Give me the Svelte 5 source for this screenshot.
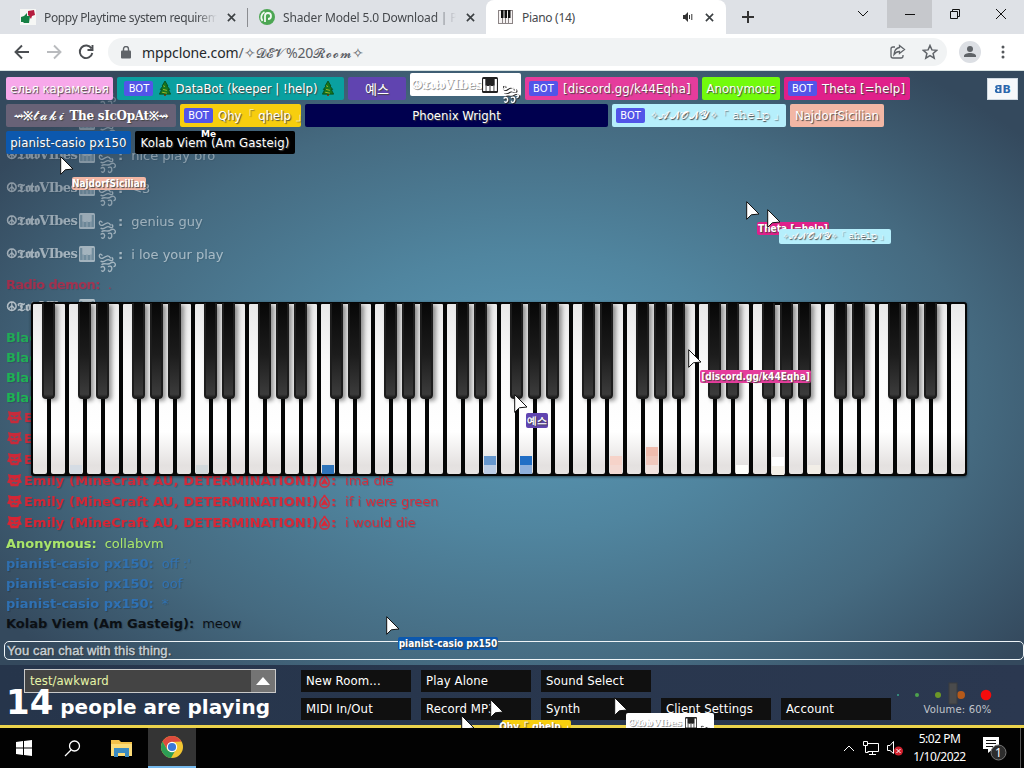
<script lang="ts">
	const whiteKeys = Array.from({ length: 52 }, (_, i) => i);
	const hasSharp = (i: number) => i < 51 && [0, 2, 3, 5, 6].includes(i % 7);

	// colours are stacked from the bottom of the key upwards
	const blips: Record<number, string[]> = {
		2: ['#d5dce4'],
		9: ['#d3d9dc'],
		16: ['#2e74ba'],
		25: ['#bccde5', '#6697cd'],
		27: ['#8eafdb', '#216ec5'],
		32: ['#f4d9d2', '#f6d3c9'],
		34: ['#f2e3df', '#f0c8bd', '#efbcae'],
		39: ['#fffffc'],
		41: ['#f4f0e8', '#ffffff'],
		43: ['#f2eee7']
	};

	const emily = 'Emily (MineCraft AU, DETERMINATION!)';

	type Line = { kind: string; name: string; text: string; color: string; opacity: number };

	const chat: Line[] = [
		{ kind: 'toto', name: '', text: '', color: '#ffffff', opacity: 0.25 },
		{ kind: 'toto', name: '', text: '', color: '#ffffff', opacity: 0.3 },
		{ kind: 'toto', name: '', text: 'nice play bro', color: '#ffffff', opacity: 0.38 },
		{ kind: 'toto', name: '', text: '<3', color: '#ffffff', opacity: 0.42 },
		{ kind: 'toto', name: '', text: 'genius guy', color: '#ffffff', opacity: 0.48 },
		{ kind: 'toto', name: '', text: 'i loe your play', color: '#ffffff', opacity: 0.52 },
		{ kind: 'plain radio', name: 'Radio demon:', text: '.', color: '#d01c3d', opacity: 0.68 },
		{ kind: 'toto', name: '', text: '', color: '#ffffff', opacity: 0.6 },
		{ kind: 'plain', name: 'Black:', text: '', color: '#16c94c', opacity: 0.72 },
		{ kind: 'plain', name: 'Black:', text: '', color: '#16c94c', opacity: 0.75 },
		{ kind: 'plain', name: 'Black:', text: '', color: '#16c94c', opacity: 0.78 },
		{ kind: 'plain', name: 'Black:', text: '', color: '#16c94c', opacity: 0.8 },
		{ kind: 'emily', name: emily, text: '', color: '#e81f2e', opacity: 0.8 },
		{ kind: 'emily', name: emily, text: '', color: '#e81f2e', opacity: 0.82 },
		{ kind: 'emily', name: emily, text: '', color: '#e81f2e', opacity: 0.84 },
		{ kind: 'emily', name: emily, text: 'ima die', color: '#e81f2e', opacity: 0.86 },
		{ kind: 'emily', name: emily, text: 'if i were green', color: '#e81f2e', opacity: 0.88 },
		{ kind: 'emily', name: emily, text: 'i would die', color: '#e81f2e', opacity: 0.9 },
		{ kind: 'plain', name: 'Anonymous:', text: 'collabvm', color: '#b6f56a', opacity: 0.9 },
		{ kind: 'plain', name: 'pianist-casio px150:', text: "off :'", color: '#2f73b8', opacity: 0.9 },
		{ kind: 'plain', name: 'pianist-casio px150:', text: 'oof', color: '#2f73b8', opacity: 0.92 },
		{ kind: 'plain', name: 'pianist-casio px150:', text: '*', color: '#2f73b8', opacity: 0.95 },
		{ kind: 'plain', name: 'Kolab Viem (Am Gasteig):', text: 'meow', color: '#0b1015', opacity: 1 }
	];

	const names = [
		[
			{ id: 'karamel', text: 'елья карамелья', bg: '#f7a8ea', w: 107 },
			{ id: 'databot', text: 'DataBot (keeper | !help)', bg: '#0aa0a0', w: 227, bot: true },
			{ id: 'yes', text: '예스', bg: '#6044b0', w: 58 },
			{ id: 'toto', text: '', bg: '#ffffff', w: 111 },
			{ id: 'discord', text: '[discord.gg/k44Eqha]', bg: '#e53c9c', w: 173, bot: true },
			{ id: 'anon', text: 'Anonymous', bg: '#72fb0c', w: 78 },
			{ id: 'theta', text: 'Theta [=help]', bg: '#e0208a', w: 126, bot: true }
		],
		[
			{ id: 'taki', text: '', bg: '#686277', w: 170 },
			{ id: 'qhy', text: 'Qhy「 qhelp 」', bg: '#f7ce0e', w: 121, bot: true },
			{ id: 'phoenix', text: 'Phoenix Wright', bg: '#00004f', w: 303 },
			{ id: 'anony', text: '', bg: '#b6effc', w: 174, bot: true },
			{ id: 'najdorf', text: 'NajdorfSicilian', bg: '#f2b7a5', w: 94 }
		],
		[
			{ id: 'pianist', text: 'pianist-casio px150', bg: '#0c58ae', w: 125 },
			{ id: 'kolab', text: 'Kolab Viem (Am Gasteig)', bg: '#000000', w: 160 }
		]
	];

	const cursors = [
		{ id: 'najdorf', x: 60, y: 156, lx: 12, ly: 21, w: 74, h: 13, text: 'NajdorfSicilian', bg: '#f2b7a5' },
		{ id: 'theta', x: 746, y: 201, lx: 11, ly: 21, w: 72, h: 13, text: 'Theta [=help]', bg: '#e0208a' },
		{ id: 'anony', x: 767, y: 209, lx: 12, ly: 20, w: 112, h: 15, text: '', bg: '#b6effc' },
		{ id: 'discord', x: 688, y: 349, lx: 12, ly: 21, w: 111, h: 13, text: '[discord.gg/k44Eqha]', bg: '#e53c9c' },
		{ id: 'yes', x: 514, y: 394, lx: 12, ly: 19, w: 22, h: 15, text: '예스', bg: '#6044b0' },
		{ id: 'pianist', x: 386, y: 616, lx: 12, ly: 21, w: 100, h: 13, text: 'pianist-casio px150', bg: '#0c58ae' },
		{ id: 'qhy', x: 490, y: 699, lx: 12, ly: 21, w: 69, h: 14, text: 'Qhy「 qhelp 」', bg: '#f7ce0e' },
		{ id: 'none', x: 461, y: 715, lx: 0, ly: 0, w: 0, h: 0, text: '', bg: '' },
		{ id: 'toto', x: 614, y: 697, lx: 12, ly: 16, w: 88, h: 20, text: '', bg: '#ffffff' }
	];

	const buttons = ['New Room...', 'Play Alone', 'Sound Select', '', '', 'MIDI In/Out', 'Record MP3', 'Synth', 'Client Settings', 'Account'];
</script>

{#snippet totoName()}
	<span class="toto-name">☮𝕿𝖔𝖙𝖔𝐕𝐈𝐛𝐞𝐬</span><svg class="keys-emoji" viewBox="0 0 16 16"><rect width="16" height="16" rx="1.5" fill="currentColor" /><path class="holes" d="M2.200 2v12M6 9v5M10 9v5M13.800 2v12" stroke-width="2.2" /><path class="holes" d="M4 8.500v5.500M8 8.500v5.500M12 8.500v5.500" stroke-width="1" /></svg><svg class="swirl" viewBox="0 0 20 24" fill="none" stroke="currentColor" stroke-width="1.5"><path d="M5 5c-4-5-5 4 0 3 5-3 7-4 9 0M3 11c5 3 6-4 10-1 4 2 4-2 2-3M4 15c3-3 7 1 10-2 5-3 7 4 3 4M3 18c4-3 5 1 4 3-1 2-3 1-3 0M11 17c5-2 5 3 3 5-2 1-3-1-2-1" /></svg>
{/snippet}

{#snippet anonyName()}
	<span class="anony-name">✧<em>𝓐𝓝𝓞𝓝𝓨</em>✧<b>「&nbsp;𝚊𝚑𝚎𝚕𝚙&nbsp;」</b></span>
{/snippet}

{#snippet tree()}
	<svg class="tree" viewBox="0 0 12 16"><path d="M5 12h2v4H5z" fill="#7a3d10" /><path d="M6 0 9 5H8l3 4H9.500l2.500 5H0l2.500-5H1l3-4H3z" fill="#16751f" stroke="#063d0b" stroke-width=".7" /><path d="m4 5 2 1M4 9l4 1M3 12l5 1" stroke="#a7bb27" /></svg>
{/snippet}

<div class="screen">
	<header class="tabs">
		<div class="tab first">
			<svg width="16" height="16" viewBox="0 0 16 16"><rect width="16" height="16" fill="#f6f7f5" /><path d="M8 2l6-1 1 5-3 1-1 3-2-3-1-1z" fill="#b51c3e" /><path d="M1 8l3-1 3-3v3h3l-1 7H4l-1-1H1z" fill="#168044" /></svg>
			<span class="title">Poppy Playtime system requirements</span>
			<svg class="x" viewBox="0 0 10 10"><path d="m1 1 8 8M9 1 1 9" /></svg>
		</div>
		<i class="divider"></i>
		<div class="tab second">
			<svg width="16" height="16" viewBox="0 0 16 16"><circle cx="8" cy="8" r="8" fill="#4ca653" /><path d="M6 13V7a3 3 0 1 1 3 3M3.500 12a6 6 0 0 1 2-9" fill="none" stroke="#f3faf3" stroke-width="1.800" /></svg>
			<span class="title">Shader Model 5.0 Download | Peatix</span>
			<svg class="x" viewBox="0 0 10 10"><path d="m1 1 8 8M9 1 1 9" /></svg>
		</div>
		<div class="tab active">
			<svg width="15" height="14" viewBox="0 0 15 14"><rect width="15" height="14" fill="#8b8485" /><path d="M1 1h3v12H1zm4 0h2v12H5zm3 0h2v12H8zm3 0h3v12h-3z" fill="#f6f3f3" /><path d="M3 0h2.500v8H3zm3.500 0H9v8H6.500zM10 0h2.500v8H10z" fill="#111" /></svg>
			<span class="title">Piano (14)</span>
			<svg class="sound" viewBox="0 0 10 10"><path d="M0 3h2l3-3v10L2 7H0z" fill="#333" /><path d="M6.500 3v4M8.800 2v6" stroke="#333" /></svg>
			<svg class="x" viewBox="0 0 10 10"><path d="m1 1 8 8M9 1 1 9" /></svg>
		</div>
		<svg class="plus" viewBox="0 0 12 12"><path d="M6 0v12M0 6h12" stroke="#333" stroke-width="2" /></svg>
		<div class="window-buttons">
			<span><svg width="12" height="12" viewBox="0 0 12 12"><path d="m1 3 5 5 5-5" /></svg></span>
			<span class="hover"><svg width="12" height="12" viewBox="0 0 12 12"><path d="M1 6.500h10" /></svg></span>
			<span><svg width="12" height="12" viewBox="0 0 12 12"><path d="M1.500 3.500h7v7h-7zM3.500 3.500v-2h7v7h-2" /></svg></span>
			<span><svg width="12" height="12" viewBox="0 0 12 12"><path d="m1 1 10 10M11 1 1 11" /></svg></span>
		</div>
	</header>

	<nav class="toolbar">
		<svg class="nav" viewBox="0 0 16 16"><path d="M15 8H2M8 1.500 1.500 8 8 14.500" /></svg>
		<svg class="nav dim" viewBox="0 0 16 16"><path d="M1 8h13M8 1.500 14.500 8 8 14.500" /></svg>
		<svg class="nav" viewBox="0 0 16 16"><path d="M13.500 4.500A6.300 6.300 0 1 0 14.300 9M14.500 1v5h-5" /></svg>
		<div class="address">
			<svg width="10" height="13" viewBox="0 0 10 13"><rect y="4.500" width="10" height="8" rx="1" fill="#5f6368" /><path d="M2.500 5V3a2.500 2.500 0 0 1 5 0v2" fill="none" stroke="#5f6368" stroke-width="1.400" /></svg>
			<span class="url">mppclone.com<em>/✧<b>𝓓𝓔𝓥</b>%20<b>𝓡𝓸𝓸𝓶</b>✧</em></span>
			<svg class="share" viewBox="0 0 16 16"><path d="M5 3H3a2 2 0 0 0-2 2v7a2 2 0 0 0 2 2h8a2 2 0 0 0 2-2v-1M9.500 1.500 14.500 5.500l-5 4V7.500C7 7.500 5.500 8.500 4 10.500c.3-3.500 2-6.500 5.500-7z" /></svg>
			<svg class="star" viewBox="0 0 16 16"><path d="m8 1.500 1.900 4.400 4.800.4-3.600 3.100 1.100 4.700L8 11.600l-4.200 2.500 1.100-4.700L1.300 6.300l4.800-.4z" /></svg>
		</div>
		<svg class="avatar" viewBox="0 0 22 22"><circle cx="11" cy="11" r="11" fill="#dcdfe4" /><circle cx="11" cy="8" r="3" fill="#5f6368" /><path d="M5 16v-1c0-4 12-4 12 0v1z" fill="#5f6368" /></svg>
		<svg class="dots" viewBox="0 0 4 14"><circle cx="2" cy="2" r="1.500" /><circle cx="2" cy="7" r="1.500" /><circle cx="2" cy="12" r="1.500" /></svg>
	</nav>

	<main class="room">
		<section class="chat">
			{#each chat as line}
				<div class="line {line.kind}" style="color: {line.color}; opacity: {line.opacity}">
					{#if line.kind === 'toto'}
						<strong>{@render totoName()}<span class="colon">:</span></strong>
					{:else if line.kind === 'emily'}
						<svg class="face" viewBox="0 0 16 16"><path d="M1 1l4 1h6l4-1-1 5 2 4-3 1-1 3H4l-1-3-3-1 2-4z" fill="currentColor" /><path d="M4 6l3 1M9 7l3-1M5 11l2-1 2 1 2-1" stroke="#51606f" stroke-width="1.300" fill="none" /></svg><strong class="emily-name">{line.name}</strong><svg class="drop" viewBox="0 0 12 16" fill="none" stroke="currentColor" stroke-width="1.600"><path d="M6 1c1 4 5 5 5 9a5 5 0 0 1-10 0C1 6 5 5 6 1z" /><path d="m3 12 3-5 3 5-3-2z" fill="currentColor" /></svg><strong>:</strong>
					{:else}
						<strong>{line.name}</strong>
					{/if}
					<span class="message">{line.text}</span>
				</div>
			{/each}
		</section>

		<div class="piano">
			{#each whiteKeys as i}
				<div class="white" class:pressed={i === 41}>
					{#if hasSharp(i)}<div class="black"></div>{/if}
					<div class="blips">
						{#each blips[i] ?? [] as color}
							<i style="background: {color}"></i>
						{/each}
					</div>
				</div>
			{/each}
		</div>

		<section class="names">
			{#each names as row}
				<div class="row">
					{#each row as p}
						<div class="name {p.id}" style="width: {p.w}px; background: {p.bg}">
							{#if p.bot}<span class="bot">BOT</span>{/if}
							{#if p.id === 'toto'}
								{@render totoName()}
							{:else if p.id === 'taki'}
								<span class="taki-name">⇝※<em>𝓽𝓪𝓴𝓲</em> The sIcOpAt※⇝</span>
							{:else if p.id === 'anony'}
								{@render anonyName()}
							{:else if p.id === 'databot'}
								{@render tree()}<span>{p.text}</span>{@render tree()}
							{:else}
								<span>{p.text}</span>
							{/if}
						</div>
					{/each}
				</div>
			{/each}
		</section>

		<button class="bb"><span class="flip">B</span><span>B</span></button>

		<div class="chat-input">You can chat with this thing.</div>

		<footer class="bottom">
			<div class="left">
				<div class="room-select"><span>test/awkward</span><i><svg width="14" height="8" viewBox="0 0 14 8"><path d="M0 8 7 0l7 8z" fill="#fff" /></svg></i></div>
				<div class="count"><b>14</b> people are playing</div>
			</div>
			<div class="buttons">
				{#each buttons as label}
					<div class:button={label !== ''}>{label}</div>
				{/each}
			</div>
			<div class="volume">
				<svg width="100" height="24" viewBox="0 0 100 24"><circle cx="3" cy="13" r="1" fill="#3aa08a" /><circle cx="22" cy="13" r="2" fill="#4da24d" /><circle cx="43" cy="13" r="3" fill="#6c9728" /><circle cx="66" cy="13" r="4" fill="#b65a1a" /><circle cx="91" cy="13" r="5.300" fill="#f50c0c" /><rect x="54" y="1" width="8" height="21" fill="#4a4b4c" stroke="#3a3c3e" /></svg>
				<span>Volume: 60%</span>
			</div>
		</footer>
	</main>

	{#each cursors as c}
		<div class="cursor" style="left: {c.x}px; top: {c.y}px">
			{#if c.w}
				<div class="label {c.id}" style="left: {c.lx}px; top: {c.ly}px; width: {c.w}px; height: {c.h}px; background: {c.bg}">
					{#if c.id === 'toto'}
						{@render totoName()}
					{:else if c.id === 'anony'}
						{@render anonyName()}
					{:else}
						<span>{c.text}</span>
					{/if}
				</div>
			{/if}
			<svg width="14" height="20" viewBox="0 0 14 20"><path d="M.7.7v17.600l4.600-4.500L13 13z" fill="#fff" stroke="#111" stroke-width="1" /></svg>
		</div>
	{/each}
	<div class="me">Me</div>

	<footer class="taskbar">
		<div class="task"><svg width="16" height="16" viewBox="0 0 16 16"><path d="m0 2 7-1v6.500H0zM8 1l8-1v7.500H8zM0 8.500h7V15l-7-1zM8 8.500h8V16l-8-1z" fill="#fff" /></svg></div>
		<div class="task"><svg width="17" height="17" viewBox="0 0 17 17" fill="none" stroke="#fff" stroke-width="1.300"><circle cx="10.500" cy="6" r="5" /><path d="m7 10-6 6" /></svg></div>
		<div class="task folder"><svg width="22" height="18" viewBox="0 0 22 18"><path d="M0 1h8l2 2h11v14H0z" fill="#f3c14b" /><path d="M0 5h21v12H0z" fill="#fcdc78" /><path d="M3 9h15v9h-4v-4H7v4H3z" fill="#3b8bc2" /></svg></div>
		<div class="task on">
			<svg width="22" height="22" viewBox="0 0 22 22"><circle cx="11" cy="11" r="11" fill="#f3c632" /><path d="M11 11 1.500 5.500A11 11 0 0 1 20.500 5.500L11 6z" fill="#dd4b3e" /><path d="M1.500 5.500 6 13l5-7z" fill="#dd4b3e" /><path d="M1.500 5.500A11 11 0 0 0 10 22l4-7H7z" fill="#2c9d55" /><circle cx="11" cy="11" r="5.200" fill="#fff" /><circle cx="11" cy="11" r="4.100" fill="#3b78d8" /></svg>
		</div>
		<div class="tray">
			<svg width="12" height="8" viewBox="0 0 12 8"><path d="m1 7 5-5 5 5" /></svg>
			<svg width="16" height="14" viewBox="0 0 16 14"><path d="M4 2.500h11.500v8H4.500M9.500 11v2.500M6 13.500h7M.5.5h4v4h-4zM2.500 4.500v7h3" /></svg>
			<svg width="16" height="15" viewBox="0 0 16 15"><path d="M.5 4.500H3l3.500-4v12L3 9.500H.5z" /><circle cx="11.500" cy="10" r="4.500" fill="#d3222f" stroke="none" /><path d="m9.500 8 4 4M13.500 8l-4 4" /></svg>
			<div class="clock"><span>5:02 PM</span><span>1/10/2022</span></div>
			<svg class="notice" width="26" height="26" viewBox="0 0 26 26"><path d="M1 2h16v12h-6l-5 4v-4H1z" fill="#fff" stroke="none" /><path d="M4 5.500h10M4 8.500h10M4 11.500h7" stroke="#111" /><circle cx="16.500" cy="17.500" r="7.500" fill="#2d2d2d" stroke="#777" /><text x="16.500" y="22" text-anchor="middle">1</text></svg>
			<i class="edge"></i>
		</div>
	</footer>
</div>

<style>
	:global(body) {
		margin: 0;
		overflow: hidden;
	}

	.screen {
		position: relative;
		width: 1024px;
		height: 768px;
		overflow: hidden;
		display: flex;
		flex-direction: column;
		font-family: 'DejaVu Sans', sans-serif;
		box-sizing: border-box;
	}

	svg {
		flex: none;
	}

	.tabs {
		height: 34px;
		background: #dee1e6;
		display: flex;
		align-items: center;
		font: 12px 'Noto Sans', sans-serif;
		color: #45484c;
	}

	.tab {
		display: flex;
		align-items: center;
		box-sizing: border-box;
	}

	.tab .title {
		white-space: nowrap;
		overflow: hidden;
	}

	.tab.first {
		width: 247px;
		padding-left: 20px;
	}

	.tab.second {
		width: 238px;
		padding-left: 11px;
	}

	.tab.first .title,
	.tab.second .title {
		width: 173px;
		margin: 0 10px 0 8px;
		letter-spacing: -0.35px;
		mask-image: linear-gradient(to right, #000 88%, transparent);
	}

	.tab.second .title {
		letter-spacing: -0.15px;
	}

	.divider {
		width: 1px;
		height: 19px;
		background: #8b8d91;
	}

	.tab.active {
		width: 240px;
		height: 34px;
		padding-left: 12px;
		background: #fff;
		border-radius: 8px 8px 0 0;
	}

	.tab.active .title {
		width: 161px;
		margin-left: 9px;
		letter-spacing: -0.3px;
	}

	.x {
		width: 9px;
		height: 9px;
		stroke: #3c4043;
		stroke-width: 1.8;
	}

	.sound {
		width: 10px;
		height: 10px;
		margin-right: 12px;
	}

	.plus {
		width: 12px;
		margin-left: 16px;
	}

	.window-buttons {
		margin-left: auto;
		display: flex;
		height: 28px;
		align-self: flex-start;
	}

	.window-buttons span {
		width: 46px;
		display: flex;
		align-items: center;
		justify-content: center;
	}

	.window-buttons span:first-child {
		width: 48px;
	}

	.window-buttons svg {
		fill: none;
		stroke: #111;
	}

	.window-buttons .hover {
		background: #c6c8cc;
		width: 45px;
	}

	.toolbar {
		height: 36px;
		background: #fff;
		border-bottom: 1px solid #d7e2e1;
		display: flex;
		align-items: center;
		padding-left: 14px;
	}

	.nav {
		width: 16px;
		height: 16px;
		margin-right: 16px;
		fill: none;
		stroke: #4b4e52;
		stroke-width: 1.9;
	}

	.nav.dim {
		stroke: #b9bbbe;
	}

	.address {
		width: 839px;
		height: 28px;
		margin-left: -2px;
		border-radius: 14px;
		background: #f1f3f4;
		display: flex;
		align-items: center;
		padding-left: 13px;
		box-sizing: border-box;
	}

	.url {
		flex: 1;
		margin-left: 11px;
		font: 14px 'Noto Sans', sans-serif;
		letter-spacing: -0.1px;
		color: #25282b;
	}

	.url em {
		font-style: normal;
		color: #5c6065;
	}

	.url b {
		font-weight: normal;
		font-size: 13px;
		letter-spacing: 0.8px;
	}

	.share,
	.star {
		width: 16px;
		height: 16px;
		margin-right: 16px;
		fill: none;
		stroke: #5f6368;
		stroke-width: 1.3;
	}

	.star {
		margin-right: 9px;
		stroke-width: 1.5;
	}

	.avatar {
		width: 22px;
		margin-left: 12px;
	}

	.dots {
		width: 4px;
		margin-left: 20px;
		fill: #55585c;
	}

	.room {
		position: relative;
		height: 657px;
		background: radial-gradient(ellipse 640px 400px at 530px 320px, #5a9ab8 0%, #50859f 35%, #456a80 70%, #34495d 100%);
	}

	.chat {
		position: absolute;
		left: 6px;
		bottom: 95px;
		width: 700px;
		font-size: 13px;
	}

	.line {
		height: 20px;
		display: flex;
		align-items: center;
		white-space: nowrap;
		text-shadow: 1px 1px 1px rgba(0, 0, 0, 0.2);
	}

	.line.toto {
		height: 26px;
		padding-bottom: 7px;
	}

	.line.emily {
		height: 21px;
	}

	.line.radio {
		letter-spacing: -0.6px;
	}

	.line strong {
		display: flex;
		align-items: center;
	}

	.message {
		margin-left: 8px;
	}

	.colon {
		margin-left: 1px;
	}

	.toto .message {
		margin-left: 8px;
	}

	.face {
		width: 17px;
		height: 15px;
		margin-right: 1px;
	}

	.emily-name {
		letter-spacing: 0.13px;
	}

	.drop {
		width: 13px;
		height: 15px;
	}

	.emily .message {
		margin-left: 9px;
	}

	.toto-name {
		font: bold 13px 'DejaVu Serif', serif;
		width: 73px;
		letter-spacing: -0.55px;
		display: inline-block;
		white-space: nowrap;
	}

	.keys-emoji {
		width: 16px;
		height: 16px;
	}

	.holes {
		stroke: #5f8397;
		opacity: 0.6;
	}

	.swirl {
		width: 20px;
		height: 22px;
		margin: 12px 0 -4px 2px;
	}

	.piano {
		position: absolute;
		isolation: isolate;
		left: 31px;
		top: 231px;
		width: 936px;
		height: 174px;
		box-sizing: border-box;
		padding: 2px 0 2px 2px;
		display: flex;
		gap: 4px;
		background: #050606;
		border-radius: 3px;
		box-shadow: 0 1px 3px rgba(0, 0, 0, 0.5);
	}

	.white {
		position: relative;
		width: 14px;
		flex: none;
		border-radius: 1px 1px 2px 2px;
		background: linear-gradient(to bottom, #e9e9e9 0%, #fafafa 35%, #fff 75%, #e4e1e0 95%, #e7e4e3 100%);
	}

	.white.pressed {
		top: 1px;
	}

	.black {
		position: absolute;
		z-index: 1;
		left: 9px;
		top: -1px;
		width: 13px;
		height: 96px;
		box-sizing: border-box;
		border: solid #1d1d1d;
		border-width: 0 2px 2px;
		border-radius: 0 0 4px 4px;
		background: linear-gradient(to bottom, #070707, #1c1c1c 55%, #3b3b3b 97%, #222);
		box-shadow: 3px 2px 4px rgba(0, 0, 0, 0.4);
	}

	.pressed .black {
		top: -2px;
	}

	.blips {
		position: absolute;
		left: 1px;
		bottom: 0;
		display: flex;
		flex-direction: column-reverse;
	}

	.blips i {
		width: 12px;
		height: 9px;
	}

	.names {
		position: relative;
		padding: 6px;
		display: flex;
		flex-direction: column;
		gap: 4px;
		font: 13px 'DejaVu Sans Condensed', 'DejaVu Sans', sans-serif;
		font-stretch: condensed;
		color: #fff;
	}

	.row {
		display: flex;
		gap: 4px;
	}

	.name {
		height: 23px;
		box-sizing: border-box;
		padding: 0 4px;
		border-radius: 2px;
		display: flex;
		align-items: center;
		justify-content: center;
		white-space: nowrap;
		text-shadow: 1px 1px 1px #444;
	}

	.bot {
		flex: none;
		width: 29px;
		height: 15px;
		margin-right: 5px;
		border-radius: 2px;
		background: #5255e8;
		font-size: 11px;
		line-height: 15px;
		text-align: center;
		text-shadow: none;
	}

	.discord,
	.theta,
	.pianist,
	.kolab {
		letter-spacing: 0.13px;
	}

	.name.discord,
	.name.theta {
		justify-content: flex-start;
	}

	.databot {
		gap: 4px;
	}

	.databot .bot {
		margin: 0 2px 0 -3px;
	}

	.tree {
		width: 12px;
		height: 15px;
	}

	.name.toto {
		position: relative;
		top: -4px;
	}

	.name.toto,
	.label.toto {
		text-shadow: 1px 1px 0 #999;
	}

	.name .swirl,
	.label .swirl {
		color: #fff;
		filter: drop-shadow(1px 1px 0 #333);
	}

	.name .keys-emoji,
	.label .keys-emoji {
		color: #222;
	}

	.name .holes,
	.label .holes {
		stroke: #fff;
		opacity: 1;
	}

	.taki-name {
		font: bold 12px 'DejaVu Serif', serif;
		letter-spacing: -0.3px;
	}

	.taki-name em {
		font-style: normal;
		font-weight: normal;
		font-size: 13px;
		letter-spacing: 1.6px;
	}

	.name.anony,
	.name.qhy {
		justify-content: flex-start;
	}

	.anony-name {
		font-size: 11px;
	}

	.anony-name em {
		font-style: normal;
		letter-spacing: 0.5px;
	}

	.anony-name b {
		font-weight: normal;
		letter-spacing: -0.3px;
	}

	.yes {
		font-family: 'Noto Sans CJK KR', sans-serif;
	}

	.bb {
		position: absolute;
		left: 987px;
		top: 7px;
		width: 31px;
		height: 22px;
		padding: 0;
		border: 1px solid #cfd9e1;
		background: #f6f8fa;
		color: #2a67ad;
		font: bold 11px 'DejaVu Sans', sans-serif;
		letter-spacing: -1px;
	}

	.flip {
		display: inline-block;
		transform: scaleX(-1);
	}

	.chat-input {
		position: absolute;
		left: 4px;
		bottom: 68px;
		width: 1020px;
		height: 19px;
		box-sizing: border-box;
		padding-left: 2px;
		border: 1px solid #eef4f7;
		border-radius: 5px;
		color: #c7d0d6;
		font: 13px/17px 'Liberation Sans', sans-serif;
		letter-spacing: 0.13px;
		-webkit-text-stroke: 0.4px #c7d0d6;
		text-shadow: 1px 1px 1px #333;
	}

	.bottom {
		position: absolute;
		left: 0;
		right: 0;
		bottom: 0;
		height: 60px;
		background: linear-gradient(to right, #26354b, #2b3850);
		border-bottom: 3px solid #ebd34c;
		color: #fff;
		display: flex;
	}

	.left {
		width: 301px;
		padding-top: 4px;
	}

	.room-select {
		width: 252px;
		height: 24px;
		margin-left: 24px;
		box-sizing: border-box;
		border: 1px solid #c9c9c9;
		background: #444;
		color: #e6f4a8;
		font: 13px/22px 'DejaVu Sans Condensed', 'DejaVu Sans', sans-serif;
		font-stretch: condensed;
		display: flex;
		justify-content: space-between;
		padding-left: 5px;
	}

	.room-select i {
		width: 24px;
		background: #747474;
		display: flex;
		align-items: center;
		justify-content: center;
	}

	.count {
		position: relative;
		top: -9px;
		margin-left: 6px;
		font-size: 20px;
		font-weight: bold;
		line-height: 36px;
		white-space: nowrap;
	}

	.count b {
		font-size: 34px;
	}

	.buttons {
		padding-top: 5px;
		display: grid;
		grid-template-columns: repeat(5, 110px);
		grid-auto-rows: 22px;
		gap: 6px 10px;
		font: 13px/22px 'DejaVu Sans Condensed', 'DejaVu Sans', sans-serif;
		font-stretch: condensed;
		letter-spacing: 0.1px;
	}

	.button {
		padding-left: 5px;
		background: #101010;
		white-space: nowrap;
	}

	.volume {
		width: 110px;
		padding: 17px 0 0 4px;
		font-size: 10px;
		text-align: center;
		color: #c0c4cb;
		display: flex;
		flex-direction: column;
	}

	.volume span {
		margin: -2px 0 0 15px;
		letter-spacing: 0.2px;
		white-space: nowrap;
	}

	.cursor {
		position: absolute;
	}

	.cursor > svg {
		position: relative;
		display: block;
	}

	.label {
		position: absolute;
		border-radius: 2px;
		display: flex;
		align-items: center;
		justify-content: center;
		color: #fff;
		font: bold 10px 'DejaVu Sans Condensed', 'DejaVu Sans', sans-serif;
		font-stretch: condensed;
		letter-spacing: 0;
		white-space: nowrap;
		text-shadow: 1px 1px 1px #444;
	}

	.label .toto-name {
		font-size: 10px;
		width: 57px;
	}

	.label .keys-emoji {
		width: 12px;
	}

	.label .swirl {
		width: 14px;
	}

	.label .anony-name {
		font-size: 8.5px;
		font-weight: normal;
		letter-spacing: -0.2px;
	}

	.me {
		position: absolute;
		left: 201px;
		top: 129px;
		color: #fff;
		font-size: 9px;
		font-weight: bold;
		text-shadow: 1px 1px 1px #000;
	}

	.taskbar {
		position: relative;
		height: 40px;
		background: #020202;
		display: flex;
	}

	.task {
		width: 48px;
		box-sizing: border-box;
		display: flex;
		align-items: center;
		justify-content: center;
	}

	.task.folder {
		width: 52px;
	}

	.task.on {
		background: #343434;
		border-bottom: 2px solid #76b9ed;
	}

	.tray {
		margin-left: auto;
		display: flex;
		align-items: center;
		color: #fff;
	}

	.tray svg {
		margin-right: 8px;
		fill: none;
		stroke: #fff;
	}

	.clock {
		width: 57px;
		margin-right: 14px;
		display: flex;
		flex-direction: column;
		align-items: center;
		font: 12px/18px 'Noto Sans', sans-serif;
		letter-spacing: -0.5px;
	}

	.notice text {
		fill: #fff;
		stroke: none;
		font: 12px 'Noto Sans', sans-serif;
	}

	.edge {
		width: 1px;
		height: 40px;
		margin: 0 3px 0 4px;
		background: #555;
	}
</style>
